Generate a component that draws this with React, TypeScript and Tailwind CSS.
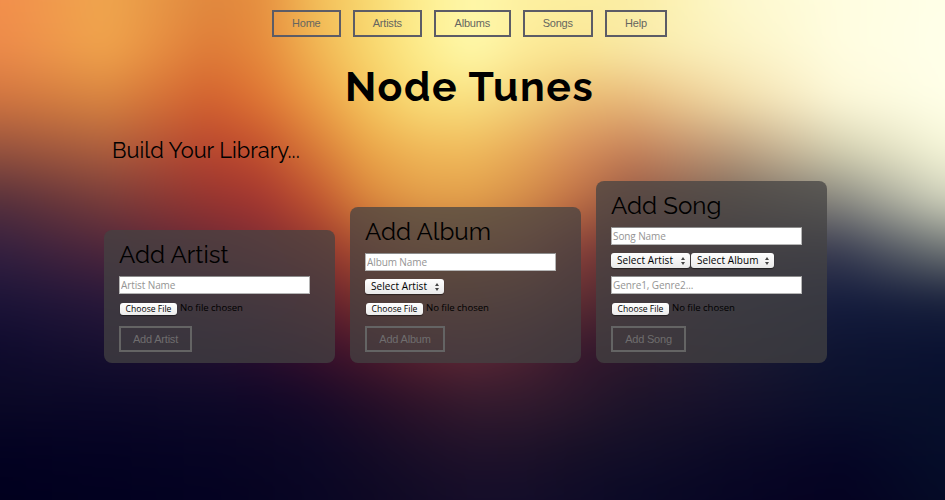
import React from 'react';

const COLUMNS = [0, 105, 210, 262, 315, 367, 420, 472, 525, 577, 630, 735, 840, 945];

const ROWS: { y: number; colors: string[] }[] = [
  { y: 0, colors: ['#f38f4c', '#efa64e', '#e0883e', '#e68f40', '#f3bd58', '#f8d870', '#fdee90', '#fff8aa', '#fdf0a0', '#fceea0', '#fbeea4', '#fdf8cc', '#fffde0', '#ffffe8'] },
  { y: 50, colors: ['#ec8a4a', '#f0a44c', '#de7a38', '#e68a3c', '#f1b452', '#f8d66c', '#fdec8c', '#fffaac', '#fdeb98', '#fae694', '#f9e9a6', '#fcf3c4', '#fffde0', '#ffffea'] },
  { y: 100, colors: ['#d07440', '#d88440', '#d2602f', '#df7534', '#ec9c44', '#f5c45c', '#f9de78', '#f9e080', '#f2cf78', '#ebba70', '#e8b878', '#f2dca8', '#fdf8d8', '#ffffe8'] },
  { y: 150, colors: ['#96523e', '#ac5e3e', '#b8452f', '#c2502e', '#d87a38', '#eba548', '#f0b858', '#f0bb5c', '#e8a858', '#d8905a', '#c68058', '#bc9c7c', '#d4d0b0', '#f6f6d8'] },
  { y: 200, colors: ['#56303c', '#783c3a', '#963430', '#a43630', '#c05230', '#da863c', '#e29c48', '#e29e4a', '#d48c48', '#c07044', '#985844', '#78685c', '#888880', '#d0d2bc'] },
  { y: 250, colors: ['#342040', '#4c263c', '#6a2836', '#7c2c34', '#92342e', '#ac4e30', '#b86838', '#b86c38', '#ac5e40', '#883c38', '#643a38', '#443a48', '#383c52', '#6e7474'] },
  { y: 300, colors: ['#1c1438', '#28183a', '#3e1c38', '#4c1c36', '#621e32', '#78322a', '#84422f', '#804434', '#743e38', '#5e2c30', '#482838', '#262642', '#141c3e', '#18203c'] },
  { y: 350, colors: ['#0f0b2e', '#171030', '#200f30', '#280e2e', '#38102c', '#4a182c', '#5a2230', '#5e2836', '#4e2232', '#38182e', '#2e182c', '#1c1a32', '#0e1432', '#0a1232'] },
  { y: 400, colors: ['#0b0926', '#0b0828', '#0e0928', '#110828', '#180a28', '#240e28', '#30142a', '#361b2e', '#331b2e', '#2a182c', '#1e142a', '#15112c', '#0b102c', '#08102c'] },
  { y: 450, colors: ['#030222', '#050323', '#070524', '#0a0624', '#0c0826', '#130b26', '#1b0f28', '#20122a', '#1e1229', '#171027', '#130f28', '#0b0a26', '#060626', '#060e2a'] },
  { y: 500, colors: ['#01001e', '#020120', '#040222', '#060422', '#090624', '#0d0824', '#110b26', '#150d29', '#130d29', '#0f0b27', '#0a0926', '#070524', '#050221', '#050b26'] },
];

/* Blurred sunset: horizontal colour bands, each fading into the next one down. */
function Backdrop() {
  return (
    <svg
      className="absolute -top-[60px] -left-[60px] -z-10 h-[620px] w-[1065px] max-w-none blur-[16px]"
      viewBox="-60 -60 1065 620"
      aria-hidden="true"
    >
      <defs>
        {ROWS.map((row, i) => (
          <React.Fragment key={row.y}>
            <linearGradient id={`band${i}`} gradientUnits="userSpaceOnUse" x1="0" y1="0" x2="945" y2="0">
              {row.colors.map((c, j) => (
                <stop key={j} offset={COLUMNS[j] / 945} stopColor={c} />
              ))}
            </linearGradient>
            {i > 0 && (
              <>
                <linearGradient id={`fade${i}`} gradientUnits="userSpaceOnUse" x1="0" y1={ROWS[i - 1].y} x2="0" y2={row.y}>
                  <stop offset="0" stopColor="#fff" stopOpacity="0" />
                  <stop offset="1" stopColor="#fff" stopOpacity="1" />
                </linearGradient>
                <mask id={`mask${i}`} maskUnits="userSpaceOnUse" x="-60" y="-60" width="1065" height="620">
                  <rect x="-60" y={ROWS[i - 1].y} width="1065" height={560 - ROWS[i - 1].y} fill={`url(#fade${i})`} />
                </mask>
              </>
            )}
          </React.Fragment>
        ))}
      </defs>
      {ROWS.map((row, i) => (
        <rect key={row.y} x="-60" y="-60" width="1065" height="620" fill={`url(#band${i})`} mask={i > 0 ? `url(#mask${i})` : undefined} />
      ))}
    </svg>
  );
}

const NAV = [
  { label: 'Home', width: 'w-[68.5px]' },
  { label: 'Artists', width: 'w-[69.5px]' },
  { label: 'Albums', width: 'w-[76.5px]' },
  { label: 'Songs', width: 'w-[70.5px]' },
  { label: 'Help', width: 'w-[62px]' },
];

function TextField({ placeholder }: { placeholder: string }) {
  return (
    <input
      placeholder={placeholder}
      className="block h-[18px] w-[191px] border border-[#b5b5b5] border-t-[#8c8c8c] bg-white px-[1px] font-['Open_Sans',sans-serif] text-[10px] leading-[14px] tracking-[-0.1px] text-black outline-none placeholder:text-[#949494]"
    />
  );
}

function Select({ label, width }: { label: string; width: string }) {
  return (
    <button
      className={`flex h-[15px] items-center justify-between rounded-[3px] bg-gradient-to-b from-white to-[#e9e9e9] pr-[5px] pl-[6px] font-['Open_Sans',sans-serif] text-[10px] leading-[14px] font-medium tracking-[0.08px] whitespace-nowrap text-black shadow-[0_1px_1px_rgba(0,0,0,0.5)] ${width}`}
    >
      <span className="-mt-px">{label}</span>
      <svg width="4" height="8" viewBox="0 0 4 8" fill="#444">
        <path d="M0 3 2 0l2 3zM0 5h4L2 8z" />
      </svg>
    </button>
  );
}

function FilePicker() {
  return (
    <div className="flex h-[14px] font-['Open_Sans',sans-serif] whitespace-nowrap text-black">
      <button className="mt-[1px] ml-[1px] h-[12px] w-[57px] rounded-[3px] bg-gradient-to-b from-white to-[#ececec] text-[8.6px] leading-[13px] shadow-[0_1px_1px_rgba(0,0,0,0.5)]">
        Choose File
      </button>
      <span className="ml-[3px] text-[9.6px] leading-[11px] tracking-[-0.05px]">No file chosen</span>
    </div>
  );
}

function Card({ title, height, submit, children }: { title: string; height: string; submit: string; children: React.ReactNode }) {
  return (
    <section className={`flex w-[231px] flex-col rounded-[8px] bg-[rgba(68,66,66,0.74)] px-[15px] pt-[8px] ${height}`}>
      <h3 className="h-[38px] font-['Raleway','Lato',sans-serif] text-[24.2px] leading-[34px] font-normal whitespace-nowrap text-black">{title}</h3>
      {children}
      <button className={`mt-[10px] h-[26px] border-2 border-[#646464] font-['Liberation_Sans',sans-serif] text-[11px] tracking-[-0.2px] whitespace-nowrap text-[#6f6d6e] ${submit}`}>
        {title}
      </button>
    </section>
  );
}

export default function App() {
  return (
    <div className="relative isolate h-[500px] w-[945px] overflow-hidden">
      <Backdrop />
      <nav className="flex gap-[12px] pt-[10px] pl-[272px]">
        {NAV.map((item) => (
          <a
            key={item.label}
            className={`flex h-[27px] items-center justify-center border-2 border-[#5c5c66] font-['Liberation_Sans',sans-serif] text-[11px] tracking-[-0.2px] text-[#666660] ${item.width}`}
          >
            {item.label}
          </a>
        ))}
      </nav>
      <h1 className="mt-[25px] h-[50px] pl-[345px] font-['Raleway','Lato',sans-serif] text-[41px] leading-[50px] font-bold tracking-[1.6px] whitespace-nowrap text-black">
        Node Tunes
      </h1>
      <h2 className="mt-[24px] h-[30px] pl-[112px] font-['Raleway','Lato',sans-serif] text-[21.8px] leading-[30px] font-normal whitespace-nowrap text-black">
        Build Your Library...
      </h2>
      <main className="mt-[15px] flex h-[182px] items-end gap-[15px] pl-[104px]">
        <Card title="Add Artist" height="h-[133px]" submit="w-[73px]">
          <TextField placeholder="Artist Name" />
          <div className="mt-[8px]"><FilePicker /></div>
        </Card>
        <Card title="Add Album" height="h-[156px]" submit="w-[80px]">
          <TextField placeholder="Album Name" />
          <div className="mt-[8px] flex"><Select label="Select Artist" width="w-[79px]" /></div>
          <div className="mt-[8px]"><FilePicker /></div>
        </Card>
        <Card title="Add Song" height="h-[182px]" submit="w-[75px]">
          <TextField placeholder="Song Name" />
          <div className="mt-[8px] flex gap-[1px]">
            <Select label="Select Artist" width="w-[79px]" />
            <Select label="Select Album" width="w-[83px]" />
          </div>
          <div className="mt-[8px]"><TextField placeholder="Genre1, Genre2..." /></div>
          <div className="mt-[8px]"><FilePicker /></div>
        </Card>
      </main>
    </div>
  );
}
